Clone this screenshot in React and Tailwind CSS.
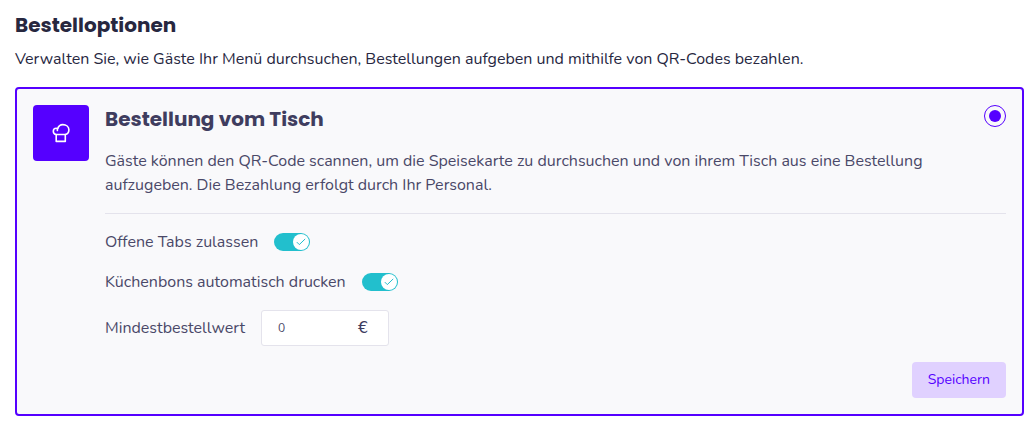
import React, { useState } from "react";

function ChefHatIcon() {
  return (
    <svg
      width="20"
      height="20"
      viewBox="0 0 20 20"
      fill="none"
      stroke="white"
      strokeWidth="1.6"
      strokeLinejoin="round"
      aria-hidden="true"
    >
      <path d="M5.2 11.5C3.6 11.3 2.3 10 2.3 8.2C2.3 6.3 3.5 5.2 5.2 5.2C5.8 5.2 6.3 5.3 6.7 5.6C7.5 3.2 9.3 1.6 11.8 1.6C15.2 1.6 17.9 3.8 17.9 6.8C17.9 9.4 16.2 11.2 14.2 11.5" />
      <path d="M6.7 5.6C6.2 6.1 6.2 6.8 6.4 7.5" strokeLinecap="round" />
      <path d="M5.2 11.5H14.3V18.4H5.2Z" />
    </svg>
  );
}

function Toggle({ id, label, checked, onChange }) {
  return (
    <div className="mt-4 flex items-center gap-4">
      <label htmlFor={id} className="leading-6">
        {label}
      </label>
      <span className="relative flex">
        <input
          id={id}
          type="checkbox"
          role="switch"
          checked={checked}
          onChange={(e) => onChange(e.target.checked)}
          className="peer h-[18px] w-9 cursor-pointer appearance-none rounded-full bg-gray-300 checked:bg-[#22bfcd]"
        />
        <span className="pointer-events-none absolute top-px left-px flex h-4 w-4 items-center justify-center rounded-full bg-white peer-checked:right-px peer-checked:left-auto">
          <svg width="10" height="8" viewBox="0 0 10 8" fill="none" stroke="#22bfcd" aria-hidden="true">
            <path d="M0.8 4.1L3.3 6.6L9.2 0.9" />
          </svg>
        </span>
      </span>
    </div>
  );
}

function App() {
  const [selected, setSelected] = useState("table");
  const [openTabs, setOpenTabs] = useState(true);
  const [autoPrint, setAutoPrint] = useState(true);
  const [minOrder, setMinOrder] = useState("0");

  const handleSubmit = (e) => {
    e.preventDefault();
  };

  return (
    <main className="bg-white pt-[9px] pr-[7px] pb-2.5 pl-[15px] font-['Nunito','Open_Sans',sans-serif] text-base text-[#27273f]">
      <h1 className="font-['Poppins','Inter',sans-serif] text-xl leading-8 font-bold">
        Bestelloptionen
      </h1>
      <p className="mt-1.5 leading-6">
        Verwalten Sie, wie Gäste Ihr Menü durchsuchen, Bestellungen aufgeben und mithilfe von QR-Codes bezahlen.
      </p>

      {/* Order option card */}
      <form
        onSubmit={handleSubmit}
        className="mt-4 flex gap-4 rounded border-2 border-[#5500ff] bg-[#f9f9fb] p-4 text-[#4a4868]"
      >
        <div className="flex h-14 w-14 shrink-0 items-center justify-center rounded bg-[#5500ff]">
          <ChefHatIcon />
        </div>

        <div className="min-w-0 flex-1">
          <div className="flex h-7 items-start justify-between">
            <h2 className="font-['Poppins','Inter',sans-serif] text-xl leading-7 font-bold text-[#3f3d5f]">
              <label htmlFor="option-table">Bestellung vom Tisch</label>
            </h2>
            <input
              id="option-table"
              type="radio"
              name="option"
              value="table"
              checked={selected === "table"}
              onChange={(e) => setSelected(e.target.value)}
              className="h-[22px] w-[22px] appearance-none rounded-full border border-[#5500ff] bg-white bg-clip-content p-1 checked:bg-[#5500ff]"
            />
          </div>

          <p className="mt-4 mr-14 leading-6">
            Gäste können den QR-Code scannen, um die Speisekarte zu durchsuchen und von ihrem Tisch aus eine Bestellung
            aufzugeben. Die Bezahlung erfolgt durch Ihr Personal.
          </p>

          <hr className="mt-4 border-[#e4e3ec]" />

          <Toggle id="open-tabs" label="Offene Tabs zulassen" checked={openTabs} onChange={setOpenTabs} />
          <Toggle id="auto-print" label="Küchenbons automatisch drucken" checked={autoPrint} onChange={setAutoPrint} />

          <div className="mt-4 flex items-center gap-4">
            <label htmlFor="min-order">Mindestbestellwert</label>
            <div className="flex h-9 w-32 items-center rounded-[3px] border border-[#e4e3ec] bg-white px-4">
              <input
                id="min-order"
                type="text"
                inputMode="decimal"
                value={minOrder}
                onChange={(e) => setMinOrder(e.target.value)}
                className="w-20 min-w-0 bg-transparent text-xs outline-none"
              />
              <span className="font-['DejaVu_Sans',sans-serif] text-base text-[#3f3d5f]">€</span>
            </div>
          </div>

          <div className="mt-4 flex justify-end">
            <button type="submit" className="h-9 rounded bg-[#e0d1ff] px-4 text-sm text-[#5500ff]">
              Speichern
            </button>
          </div>
        </div>
      </form>
    </main>
  );
}

export default App;
